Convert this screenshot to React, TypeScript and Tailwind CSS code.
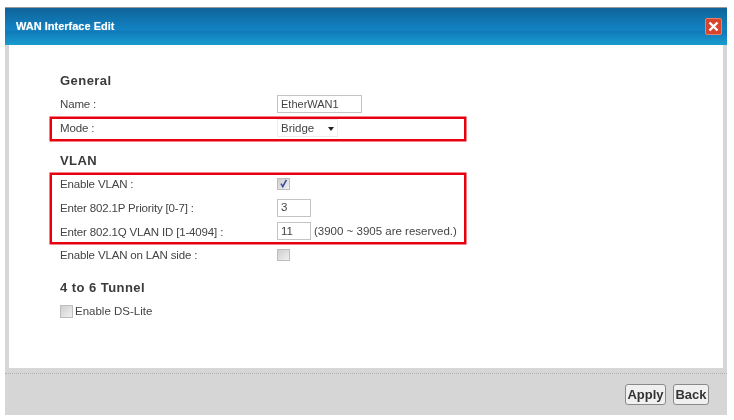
function Row({ label, children }: { label: string; children: React.ReactNode }) {
  return (
    <div className="flex h-6 items-center pb-[2px]">
      <div className="mt-[2px] w-[217px] shrink-0 tracking-[-0.16px] text-[#444]">{label}</div>
      <div className="flex items-center">{children}</div>
    </div>
  );
}

function Check({ checked = false }: { checked?: boolean }) {
  return (
    <div className="flex h-[12.5px] w-[13px] items-center justify-center border border-[#bdbdbd] bg-gradient-to-br from-[#cfcfcf] to-[#f0f0f0]">
      {checked && (
        <svg width="11" height="11" viewBox="0 0 11 11">
          <path d="M3 5.6 L4.8 8.6 L8.4 1.8" fill="none" stroke="#3b4fa0" strokeWidth="1.6" />
        </svg>
      )}
    </div>
  );
}

function Field({ value, w }: { value: string; w: string }) {
  return (
    <div className={`flex h-[18px] items-center border border-[#c4c4c4] bg-white pl-[3px] text-[#444] ${w}`}>{value}</div>
  );
}

function Btn({ label, w }: { label: string; w: string }) {
  return (
    <div className={`flex h-[21px] items-center justify-center rounded-[3px] border border-[#8a8a8a] bg-[#f0f0f0] text-[13px] font-bold text-[#333] ${w}`}>
      {label}
    </div>
  );
}

function Heading({ children }: { children: React.ReactNode }) {
  return <div className="h-[16px] text-[13px] font-bold leading-4 tracking-[0.45px] text-[#3a3a3a]">{children}</div>;
}

export default function App() {
  return (
    <div className="h-[420px] w-[734px] overflow-hidden bg-white pl-[5px] pr-[7px] pt-[7px] font-['Liberation_Sans',Arial,sans-serif] text-[11.5px] blur-[0.4px]">
      <div className="flex h-[408px] flex-col border-t border-[#999]">
        <div className="flex h-[37px] shrink-0 items-center justify-between bg-[linear-gradient(#0f6499_0%,#1283c4_60%,#1078b8_62%,#1a9ccf_100%)] pl-[11px] pr-[5px]">
          <span className="-mt-[1px] text-[11px] font-bold text-white [text-shadow:0_0_1px_#fff8]">WAN Interface Edit</span>
          <div className="flex h-[17px] w-[17px] items-center justify-center rounded-[2px] border border-[#e8806a] bg-[#d8432c]">
            <svg width="13" height="13" viewBox="0 0 13 13">
              <path d="M2.5 2.5 L10.5 10.5 M10.5 2.5 L2.5 10.5" stroke="#fff" strokeWidth="2.4" />
            </svg>
          </div>
        </div>
        <div className="flex min-h-0 flex-1 flex-col bg-[#d6d6d6]">
          <div className="mx-[4px] h-[323px] shrink-0 bg-white pl-[51px] pt-[28px]">
            <Heading>General</Heading>
            <div className="mt-[4px]">
              <Row label="Name :">
                <Field value="EtherWAN1" w="w-[85px] text-[11px]" />
              </Row>
            </div>
            <div className="-ml-[10px] flex h-6 w-[416px] items-center border-2 border-[#e8000f] pl-[8px] shadow-[0_0_0_0.5px_#e8000f]">
              <Row label="Mode :">
                <div className="flex h-[18px] w-[61px] items-center justify-between border border-[#eeeeee] pl-[3px] pr-[3px] pt-[1px] text-[#444]">
                  Bridge
                  <span className="h-0 w-0 border-x-[3.5px] border-t-[4px] border-x-transparent border-t-[#222]" />
                </div>
              </Row>
            </div>
            <div className="mt-[12px]">
              <Heading>VLAN</Heading>
            </div>
            <div className="mt-[4px] -ml-[10px] h-[71px] w-[416px] border-2 border-[#e8000f] pl-[8px] shadow-[0_0_0_0.5px_#e8000f]">
              <div className="-my-[2px] flex h-[71px] flex-col justify-between">
                <Row label="Enable VLAN :">
                  <Check checked />
                </Row>
                <Row label="Enter 802.1P Priority [0-7] :">
                  <Field value="3" w="w-[34px]" />
                </Row>
                <Row label="Enter 802.1Q VLAN ID [1-4094] :">
                  <Field value="11" w="w-[34px]" />
                  <span className="ml-[3px] text-[#444]">(3900 ~ 3905 are reserved.)</span>
                </Row>
              </div>
            </div>
            <Row label="Enable VLAN on LAN side :">
              <Check />
            </Row>
            <div className="mt-[12px]">
              <Heading>4 to 6 Tunnel</Heading>
            </div>
            <div className="mt-[4px] flex h-6 items-center gap-[2px] pb-[1px] text-[#444]">
              <Check />
              Enable DS-Lite
            </div>
          </div>
          <div className="mt-[5px] border-t border-dotted border-[#b0b0b0]" />
          <div className="flex flex-1 items-center justify-end gap-[7px] pb-[2px] pr-[18px] pt-[2px]">
            <Btn label="Apply" w="w-[41px]" />
            <Btn label="Back" w="w-[36px]" />
          </div>
        </div>
      </div>
    </div>
  );
}
